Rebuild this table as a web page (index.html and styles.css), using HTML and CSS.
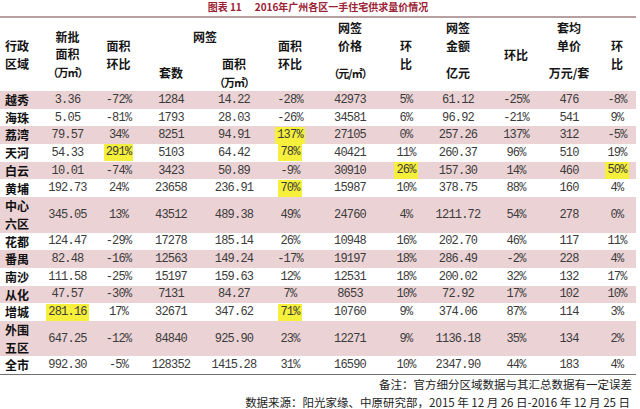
FILE: index.html
```html
<!DOCTYPE html>
<html lang="zh-CN">
<head>
<meta charset="utf-8">
<title>2016年广州各区一手住宅供求量价情况</title>
<link rel="stylesheet" href="styles.css">
</head>
<body>
<div class="title"><span class="tno">图表 11</span><span>2016年广州各区一手住宅供求量价情况</span></div>
<table class="grid">
  <colgroup>
    <col class="c1"><col class="c2"><col class="c3"><col class="c4"><col class="c5"><col class="c6">
    <col class="c7"><col class="c8"><col class="c9"><col class="c10"><col class="c11"><col class="c12">
  </colgroup>
  <thead>
    <tr class="ha">
      <th rowspan="2" class="name">行政<br>区域</th>
      <th rowspan="2">新批<br>面积<br><span class="unit">（万㎡）</span></th>
      <th rowspan="2">面积<br>环比</th>
      <th colspan="2">网签</th>
      <th rowspan="2">面积<br>环比</th>
      <th>网签<br>价格</th>
      <th rowspan="2">环<br>比</th>
      <th>网签<br>金额</th>
      <th rowspan="2">环比</th>
      <th>套均<br>单价</th>
      <th rowspan="2">环<br>比</th>
    </tr>
    <tr class="hb">
      <th>套数</th>
      <th>面积<br><span class="unit">（万㎡）</span></th>
      <th><span class="unit">（元/㎡）</span></th>
      <th>亿元</th>
      <th>万元/套</th>
    </tr>
  </thead>
  <tbody>
    <tr class="p"><th class="name">越秀</th><td>3.36</td><td>-72%</td><td>1284</td><td>14.22</td><td>-28%</td><td>42973</td><td>5%</td><td>61.12</td><td>-25%</td><td>476</td><td>-8%</td></tr>
    <tr><th class="name">海珠</th><td>5.05</td><td>-81%</td><td>1793</td><td>28.03</td><td>-26%</td><td>34581</td><td>6%</td><td>96.92</td><td>-21%</td><td>541</td><td>9%</td></tr>
    <tr class="p"><th class="name">荔湾</th><td>79.57</td><td>34%</td><td>8251</td><td>94.91</td><td><span class="hl">137%</span></td><td>27105</td><td>0%</td><td>257.26</td><td>137%</td><td>312</td><td>-5%</td></tr>
    <tr><th class="name">天河</th><td>54.33</td><td><span class="hl">291%</span></td><td>5103</td><td>64.42</td><td><span class="hl">78%</span></td><td>40421</td><td>11%</td><td>260.37</td><td>96%</td><td>510</td><td>19%</td></tr>
    <tr class="p"><th class="name">白云</th><td>10.01</td><td>-74%</td><td>3423</td><td>50.89</td><td>-9%</td><td>30910</td><td><span class="hl">26%</span></td><td>157.30</td><td>14%</td><td>460</td><td><span class="hl">50%</span></td></tr>
    <tr><th class="name">黄埔</th><td>192.73</td><td>24%</td><td>23658</td><td>236.91</td><td><span class="hl">70%</span></td><td>15987</td><td>10%</td><td>378.75</td><td>88%</td><td>160</td><td>4%</td></tr>
    <tr class="p dbl"><th class="name">中心<br>六区</th><td>345.05</td><td>13%</td><td>43512</td><td>489.38</td><td>49%</td><td>24760</td><td>4%</td><td>1211.72</td><td>54%</td><td>278</td><td>0%</td></tr>
    <tr><th class="name">花都</th><td>124.47</td><td>-29%</td><td>17278</td><td>185.14</td><td>26%</td><td>10948</td><td>16%</td><td>202.70</td><td>46%</td><td>117</td><td>11%</td></tr>
    <tr class="p"><th class="name">番禺</th><td>82.48</td><td>-16%</td><td>12563</td><td>149.24</td><td>-17%</td><td>19197</td><td>18%</td><td>286.49</td><td>-2%</td><td>228</td><td>4%</td></tr>
    <tr><th class="name">南沙</th><td>111.58</td><td>-25%</td><td>15197</td><td>159.63</td><td>12%</td><td>12531</td><td>18%</td><td>200.02</td><td>32%</td><td>132</td><td>17%</td></tr>
    <tr class="p"><th class="name">从化</th><td>47.57</td><td>-30%</td><td>7131</td><td>84.27</td><td>7%</td><td>8653</td><td>10%</td><td>72.92</td><td>17%</td><td>102</td><td>10%</td></tr>
    <tr><th class="name">增城</th><td><span class="hl">281.16</span></td><td>17%</td><td>32671</td><td>347.62</td><td><span class="hl">71%</span></td><td>10760</td><td>9%</td><td>374.06</td><td>87%</td><td>114</td><td>3%</td></tr>
    <tr class="p dbl"><th class="name">外围<br>五区</th><td>647.25</td><td>-12%</td><td>84840</td><td>925.90</td><td>23%</td><td>12271</td><td>9%</td><td>1136.18</td><td>35%</td><td>134</td><td>2%</td></tr>
    <tr class="last"><th class="name">全市</th><td>992.30</td><td>-5%</td><td>128352</td><td>1415.28</td><td>31%</td><td>16590</td><td>10%</td><td>2347.90</td><td>44%</td><td>183</td><td>4%</td></tr>
  </tbody>
</table>
<p class="note">备注：官方细分区域数据与其汇总数据有一定误差</p>
<p class="source">数据来源：阳光家缘、中原研究部，2015 年 12 月 26 日-2016 年 12 月 25 日</p>
</body>
</html>
```
FILE: styles.css
```css
body {
  margin: 0;
  background: #ffffff;
  font-family: "Noto Sans CJK SC", "Noto Sans", sans-serif;
  color: #1a1a1a;
}

.title {
  width: 636px;
  height: 16px;
  border-bottom: 2px solid #b89fa1;
  text-align: center;
  font-size: 10px;
  line-height: 14px;
  font-weight: 700;
  color: #9b2335;
}

.title .tno {
  margin-right: 13px;
}

.grid {
  width: 636px;
  table-layout: fixed;
  border-collapse: collapse;
  border-spacing: 0;
  border-bottom: 1px solid #707070;
}

.c1 { width: 40px; }
.c2 { width: 55px; }
.c3 { width: 47px; }
.c4 { width: 58px; }
.c5 { width: 68px; }
.c6 { width: 44px; }
.c7 { width: 76px; }
.c8 { width: 36px; }
.c9 { width: 68px; }
.c10 { width: 48px; }
.c11 { width: 58px; }
.c12 { width: 38px; }

.grid th,
.grid td {
  padding: 0;
  text-align: center;
  vertical-align: middle;
  white-space: nowrap;
}

thead th {
  font-size: 12px;
  line-height: 17.5px;
  font-weight: 700;
  color: #151515;
}

thead .ha {
  height: 37px;
}

thead .hb {
  height: 34px;
}

.unit {
  font-size: 11px;
  letter-spacing: -1px;
}

.grid .name {
  text-align: left;
  padding-left: 5px;
  font-size: 12px;
  font-weight: 700;
  color: #111;
}

tbody tr {
  height: 17.7px;
}

tbody tr.dbl {
  height: 35.4px;
}

tbody .name {
  line-height: 17.5px;
}

tbody td {
  font-family: "Liberation Mono", "DejaVu Sans Mono", monospace;
  font-size: 12px;
  letter-spacing: -0.8px;
  line-height: 16px;
  color: #3b3b3b;
}

tbody tr.p {
  background: #ebd3d5;
}

.hl {
  display: inline-block;
  background: #f6ef3c;
  line-height: 17px;
  padding: 0 2px;
  vertical-align: middle;
}

.note,
.source {
  margin: 0;
  font-size: 11.5px;
  line-height: 18px;
  color: #222;
  text-align: right;
}

.note {
  padding-right: 8px;
}

.source {
  padding-right: 10px;
}
```
